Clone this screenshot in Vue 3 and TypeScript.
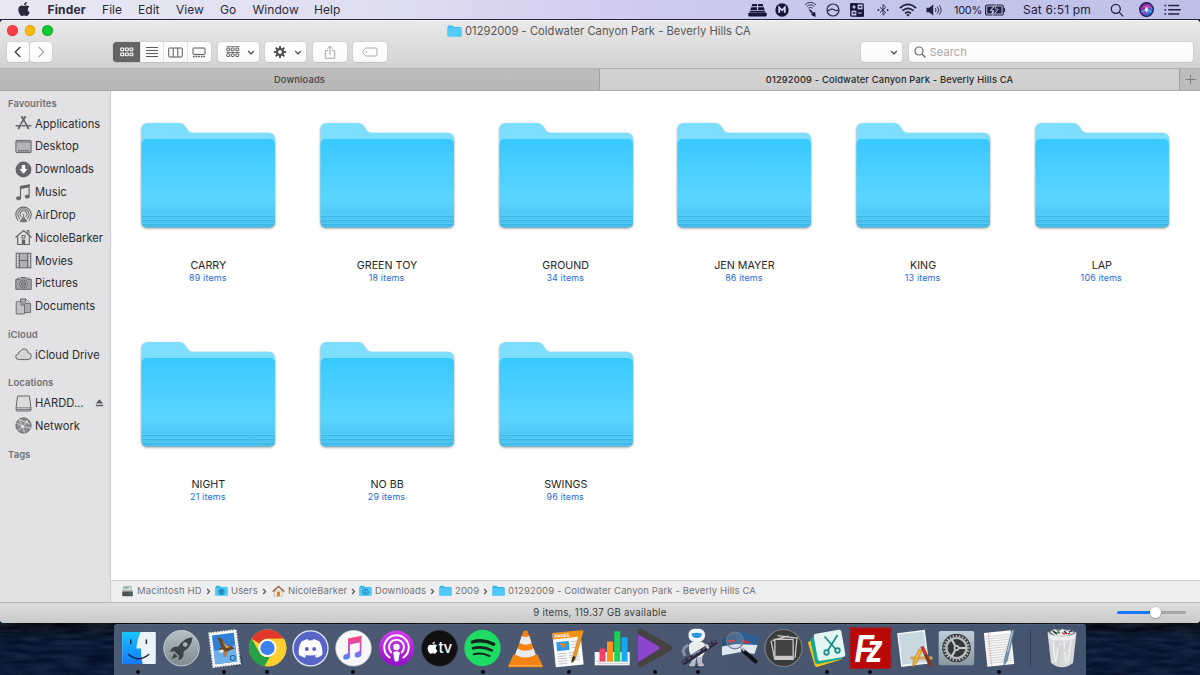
<script setup lang="ts">
interface SideItem { label: string; icon: string; eject?: boolean }
interface SideSection { title: string; items: SideItem[] }

const menus: string[] = ['File', 'Edit', 'View', 'Go', 'Window', 'Help']

const sections: SideSection[] = [
  {
    title: 'Favourites',
    items: [
      { label: 'Applications', icon: 'apps' },
      { label: 'Desktop', icon: 'desktop' },
      { label: 'Downloads', icon: 'downloads' },
      { label: 'Music', icon: 'music' },
      { label: 'AirDrop', icon: 'airdrop' },
      { label: 'NicoleBarker', icon: 'home' },
      { label: 'Movies', icon: 'movies' },
      { label: 'Pictures', icon: 'pictures' },
      { label: 'Documents', icon: 'documents' },
    ],
  },
  { title: 'iCloud', items: [{ label: 'iCloud Drive', icon: 'cloud' }] },
  {
    title: 'Locations',
    items: [
      { label: 'HARDD...', icon: 'disk', eject: true },
      { label: 'Network', icon: 'network' },
    ],
  },
  { title: 'Tags', items: [] },
]

const folders = [
  { name: 'CARRY', count: 89 },
  { name: 'GREEN TOY', count: 18 },
  { name: 'GROUND', count: 34 },
  { name: 'JEN MAYER', count: 86 },
  { name: 'KING', count: 13 },
  { name: 'LAP', count: 106 },
  { name: 'NIGHT', count: 21 },
  { name: 'NO BB', count: 29 },
  { name: 'SWINGS', count: 96 },
]

const crumbs = [
  { label: 'Macintosh HD', icon: 'hd' },
  { label: 'Users', icon: 'users' },
  { label: 'NicoleBarker', icon: 'house' },
  { label: 'Downloads', icon: 'down' },
  { label: '2009', icon: 'folder' },
  { label: '01292009 - Coldwater Canyon Park - Beverly Hills CA', icon: 'folder' },
]

const dock: { id: string; running: boolean }[] = [
  { id: 'finder', running: true },
  { id: 'launchpad', running: false },
  { id: 'mail', running: true },
  { id: 'chrome', running: true },
  { id: 'discord', running: false },
  { id: 'music', running: true },
  { id: 'podcasts', running: false },
  { id: 'tv', running: false },
  { id: 'spotify', running: true },
  { id: 'vlc', running: false },
  { id: 'pages', running: true },
  { id: 'numbers', running: false },
  { id: 'play', running: true },
  { id: 'automator', running: true },
  { id: 'preview', running: false },
  { id: 'photos', running: false },
  { id: 'scissors', running: true },
  { id: 'filezilla', running: true },
  { id: 'applescript', running: false },
  { id: 'prefs', running: false },
  { id: 'textedit', running: true },
]

const angles = (n: number): number[] => Array.from({ length: n }, (_, i) => (i * 360) / n)
const range = (n: number): number[] => Array.from({ length: n }, (_, i) => i)

const applePath =
  'M12.152 6.896c-.948 0-2.415-1.078-3.96-1.04-2.04.027-3.91 1.183-4.961 3.014-2.117 3.675-.546 9.103 1.519 12.09 1.013 1.454 2.208 3.09 3.792 3.039 1.52-.065 2.09-.987 3.935-.987 1.831 0 2.35.987 3.96.948 1.637-.026 2.676-1.48 3.676-2.948 1.156-1.688 1.636-3.325 1.662-3.415-.039-.013-3.182-1.221-3.22-4.857-.026-3.04 2.48-4.494 2.597-4.559-1.429-2.09-3.623-2.324-4.39-2.376-2-.156-3.675 1.09-4.61 1.09zM15.53 3.83c.843-1.012 1.4-2.427 1.245-3.83-1.207.052-2.662.805-3.532 1.818-.78.896-1.454 2.338-1.273 3.714 1.338.104 2.715-.688 3.559-1.701'
const backPath = 'M3.500 7.500q0-6.500 6.500-6.500h31.500q3.200 0 5.200 2.800l3.200 4.700q1.700 2.200 4.400 2.200h76.200q6.500 0 6.500 6.500v80h-133.500z'
const smallFolder = 'M.5 1.800q0-1.300 1.300-1.300h3.300q.7 0 1.100.6l.6.800h6.400q1.300 0 1.300 1.300v7.500q0 .8-.8.800h-12.400q-.8 0-.8-.8z'
</script>

<template>
  <div class="screen">
    <header class="menubar">
      <nav class="menus">
        <svg class="apple" width="14" height="14" viewBox="0 0 24 24"><path :d="applePath" fill="#2b2a3c" /></svg>
        <b>Finder</b>
        <span v-for="m in menus" :key="m">{{ m }}</span>
      </nav>
      <div class="status">
        <svg width="19" height="14" viewBox="0 0 19 14" fill="#17163a">
          <path d="M4.300 1h4.700v2.300h-5.400zM10 1h4.700l.7 2.300h-5.400zM3.200 4.200h5.800v2.700h-6.700zM10 4.200h5.800l.9 2.700h-6.700zM2.200 7.800h14.600l.8 1.600h-16.200z" />
          <rect x=".3" y="9.800" width="18.400" height="3.600" rx=".8" />
        </svg>
        <svg width="14" height="14" viewBox="0 0 14 14"><circle cx="7" cy="7" r="6.700" fill="#17163a" /><path d="M4.200 9.800v-5.400l2.800 2.900 2.800-2.900v5.400" fill="none" stroke="#d3d2f0" stroke-width="1.800" /></svg>
        <svg width="14" height="17" viewBox="0 0 14 17" fill="none" stroke="#33325c" stroke-width="1">
          <path d="M1 3.800q5.500-5 11 0M2.700 5.500q3.800-3.400 7.600 0M4.400 7.200q2.100-1.800 4.200 0" />
          <path d="M4.500 8.800l2.200-.3 3.300 4-1.500 1z" fill="#2a2950" stroke="none" />
          <path d="M10.500 10.500l1 2.500v3l-5-2.500 2-.5z" fill="#17163a" stroke="none" />
        </svg>
        <svg width="14" height="14" viewBox="0 0 14 14" fill="none" stroke="#2b2a4c" stroke-width="1.200"><circle cx="7" cy="7" r="6" /><path d="M1.200 8.400c2.800-1.600 3.600-3 5.800-2.200s3.200 2.800 5.800.6" /></svg>
        <svg width="14" height="14" viewBox="0 0 14 14" fill="none" stroke="#17163a" stroke-width="1.300">
          <rect x=".8" y=".8" width="12.400" height="12.400" rx=".8" /><rect x="1" y="1" width="6" height="6" fill="#17163a" /><rect x="7" y="7" width="6" height="6" fill="#17163a" />
          <path d="M2.200 4h3.600M4 2.200v3.600M8.300 10h3.400" stroke="#dcdcf4" stroke-width="1.200" /><path d="M8.800 4h2.700M2.700 10h2.700" stroke-width="1.300" />
        </svg>
        <svg width="12" height="14" viewBox="0 0 12 14" fill="none" stroke="#33325c" stroke-width="1"><path d="M3 4.300l5.800 5.200-2.800 2.700v-10.600l2.800 2.700-5.800 5.200" /><path d="M.6 7h1.600M9.800 7h1.600" stroke-width="1.800" /></svg>
        <svg width="18" height="14" viewBox="0 0 18 14" fill="none" stroke="#22213f" stroke-width="1.700"><path d="M.9 5q8.100-7.200 16.200 0M3.500 7.700q5.500-4.700 11 0M6 10.300q3-2.400 6 0" /><path d="M7.200 11.700q1.800-1.400 3.600 0l-1.800 1.800z" fill="#22213f" stroke="none" /></svg>
        <svg width="16" height="12" viewBox="0 0 16 12"><path d="M.5 3.700h2.700l4-3.200v11l-4-3.200h-2.700z" fill="#22213f" /><path d="M9.300 4q1.600 2 0 4M11.300 2.500q3 3.500 0 7M13.300 1.300q3.700 4.700 0 9.400" fill="none" stroke="#33325a" stroke-width="1" /></svg>
        <span class="percent">100%</span>
        <svg width="21" height="12" viewBox="0 0 21 12"><rect x=".6" y="1" width="17.600" height="10" rx="1.600" fill="none" stroke="#22213f" stroke-width="1.200" /><path d="M19 4q1.500 2 0 4z" fill="#22213f" stroke="#22213f" /><path d="M2.200 2.500h6l-3.500 4.300h2.700l-1 2.800h-4.200zM10.500 2.500h6v7h-6.500l3.700-4.400h-3.500z" fill="#22213f" /><path d="M11.200.6l-5.500 6h3l-1 5 5.500-6.500h-3z" fill="#22213f" stroke="#c5c6ea" stroke-width=".7" /></svg>
        <span class="clock">Sat 6:51 pm</span>
        <svg width="14" height="14" viewBox="0 0 14 14" fill="none" stroke="#22213f" stroke-width="1.300"><circle cx="5.800" cy="5.800" r="4.500" /><path d="M9.100 9.100l4 4.300" /></svg>
        <svg width="15" height="15" viewBox="0 0 15 15">
          <defs><linearGradient id="siri" x1="0" y1="0" x2="1" y2="1"><stop offset="0" stop-color="#33206e" /><stop offset=".45" stop-color="#9b3ac0" /><stop offset=".75" stop-color="#2f74e0" /><stop offset="1" stop-color="#160f3a" /></linearGradient></defs>
          <circle cx="7.500" cy="7.500" r="6.800" fill="url(#siri)" stroke="#1b1746" stroke-width="1.200" /><path d="M2.600 6.500q5-6.500 9.800 0q-4.800-2-9.800 0" fill="#ee49a9" opacity=".8" /><path d="M2.700 9.700q3-.7 4.800-3.700 1.800 3 4.800 3.700" fill="none" stroke="#4fdcf5" stroke-width="1.100" /><path d="M7.500 4.500l1.500 3.500-1.500 3-1.500-3z" fill="#fff" opacity=".9" />
        </svg>
        <svg width="17" height="12" viewBox="0 0 17 12" fill="none" stroke="#22213f" stroke-width="1.600"><path d="M4.200 1.500h11M4.200 5.700h12.500M4.200 10h11M.5 1.500h1.700M.5 5.700h1.700M.5 10h1.700" /></svg>
      </div>
    </header>

    <main class="window">
      <section class="chrome">
        <div class="titlebar">
          <div class="lights"><i class="red"></i><i class="amber"></i><i class="green"></i></div>
          <div class="title">
            <svg width="15" height="12" viewBox="0 0 15 12"><path :d="smallFolder" fill="#3cbff0" /><rect x=".5" y="3" width="14" height="8.500" rx=".7" fill="#52ccfb" /></svg>
            <span>01292009 - Coldwater Canyon Park - Beverly Hills CA</span>
          </div>
        </div>
        <div class="toolbar">
          <div class="pair">
            <button><svg width="10" height="14" viewBox="0 0 10 14"><path d="M7.300 2l-5 5 5 5" fill="none" stroke="#444" stroke-width="1.400" /></svg></button>
            <button><svg width="10" height="14" viewBox="0 0 10 14"><path d="M2.700 2l5 5-5 5" fill="none" stroke="#a9a9a9" stroke-width="1.200" /></svg></button>
          </div>
          <div class="views">
            <button class="on"><svg width="14" height="10" viewBox="0 0 14 10" fill="none" stroke="#fff" stroke-width="1.100"><template v-for="r in 2" :key="r"><rect v-for="c in 3" :key="c" :x="c * 4.600 - 3.900" :y="r * 5 - 4" width="3" height="2.700" rx=".7" /></template></svg></button>
            <button><svg width="14" height="12" viewBox="0 0 14 12" stroke="#5a5a5a" stroke-width="1"><path d="M1 1.500h12M1 4.500h12M1 7.500h12M1 10.500h12" /></svg></button>
            <button><svg width="15" height="11" viewBox="0 0 15 11" fill="none" stroke="#5a5a5a" stroke-width="1"><rect x=".7" y="1" width="13.600" height="9" rx=".8" /><path d="M5.200 1v9M9.800 1v9" /></svg></button>
            <button><svg width="14" height="11" viewBox="0 0 14 11" fill="none" stroke="#555" stroke-width="1"><rect x="1" y="1" width="12" height="6.400" rx=".8" /><path d="M1 9.500h12" stroke-width="1.400" stroke-dasharray="1.700 .9" /></svg></button>
          </div>
          <button class="wide group">
            <svg width="14" height="13" viewBox="0 0 14 13" fill="none" stroke="#555" stroke-width="1"><path d="M.5 .7h13M.5 6.500h13" stroke-width=".8" /><template v-for="r in 2" :key="r"><rect v-for="c in 3" :key="c" :x="c * 4.500 - 3.700" :y="r * 5.700 - 3.600" width="2.900" height="2.700" rx=".7" /></template></svg>
            <svg class="caret" width="8" height="5" viewBox="0 0 8 5"><path d="M1.200 1l2.800 2.800 2.800-2.800" fill="none" stroke="#444" stroke-width="1.200" /></svg>
          </button>
          <button class="wide action">
            <svg width="14" height="14" viewBox="0 0 14 14"><g fill="#4f4f4f"><rect v-for="a in angles(8)" :key="a" x="6" y=".9" width="2" height="4" rx=".5" :transform="`rotate(${a} 7 7)`" /></g><circle cx="7" cy="7" r="3" fill="none" stroke="#4f4f4f" stroke-width="2.200" /></svg>
            <svg class="caret" width="8" height="5" viewBox="0 0 8 5"><path d="M1.200 1l2.800 2.800 2.800-2.800" fill="none" stroke="#444" stroke-width="1.200" /></svg>
          </button>
          <button class="single share"><svg width="12" height="15" viewBox="0 0 12 15" fill="none" stroke="#a5a5a5" stroke-width="1"><path d="M4 5.500h-2.700v7.700h9.400v-7.700h-2.700M6 9.800v-8.500M3.500 3.800l2.500-2.600 2.500 2.600" /></svg></button>
          <button class="single"><svg width="16" height="10" viewBox="0 0 16 10" fill="none" stroke="#ababab" stroke-width="1"><path d="M4.300 1h9.700q1 0 1 1v6q0 1-1 1h-9.700q-.6 0-1-.4l-2.500-3q-.4-.6 0-1.200l2.500-3q.4-.4 1-.4z" /><circle cx="4.500" cy="5" r=".5" /></svg></button>
          <span class="spacer"></span>
          <button class="wide blank"><svg class="caret" width="8" height="5" viewBox="0 0 8 5"><path d="M1.200 1l2.800 2.800 2.800-2.800" fill="none" stroke="#444" stroke-width="1.200" /></svg></button>
          <div class="search">
            <svg width="12" height="12" viewBox="0 0 12 12" fill="none" stroke="#6b6b6b" stroke-width="1.200"><circle cx="5" cy="5" r="4" /><path d="M8 8l3.500 3.500" /></svg>
            <span>Search</span>
          </div>
        </div>
      </section>

      <div class="tabs">
        <div class="tab">Downloads</div>
        <div class="tab active">01292009 - Coldwater Canyon Park - Beverly Hills CA</div>
        <div class="add"><svg width="11" height="11" viewBox="0 0 11 11"><path d="M5.500 .5v10M.5 5.500h10" stroke="#777" stroke-width=".9" /></svg></div>
      </div>

      <div class="body">
        <aside class="sidebar">
          <section v-for="s in sections" :key="s.title">
            <h3>{{ s.title }}</h3>
            <div v-for="it in s.items" :key="it.label" class="side-item">
              <svg width="17" height="17" viewBox="0 0 17 17" fill="none" stroke="#66666a" stroke-width="1">
                <g v-if="it.icon === 'apps'" stroke-width="1.900"><path d="M6.500 1.300l7.200 12.700M10.500 1.300l-7.200 12.700" /><path d="M.6 10.700h4.200M6.600 10.700h3.800M12.600 10.700h3.700" stroke-width="1.500" /><path d="M8.200 6.800l-1.900 3.300M8.800 6.500l1.600 3" stroke="#e2e2e4" stroke-width=".5" /></g>
                <g v-else-if="it.icon === 'desktop'"><rect x=".9" y="2.400" width="15.200" height="12.200" rx=".6" fill="#b4b4b8" /><path d="M1 4h15" stroke-width=".8" /><path d="M3 12.700h11.500" stroke-width="1.600" stroke-dasharray="1.700 .6" /></g>
                <g v-else-if="it.icon === 'downloads'"><circle cx="8.500" cy="8.500" r="7.900" fill="#66666a" stroke="none" /><path d="M6.800 4h3.400v4h2.400l-4.100 4.800-4.100-4.800h2.400z" fill="#fff" stroke="none" /></g>
                <g v-else-if="it.icon === 'music'" fill="#66666a"><path d="M5.500 13.800v-11.300l8.600-1.600v11.300" fill="none" stroke-width="1.200" /><path d="M5 2.400l9.600-1.900v2.800l-9.600 2z" stroke="none" /><ellipse cx="3.600" cy="14.300" rx="2.100" ry="1.500" /><ellipse cx="12.300" cy="12.600" rx="2.100" ry="1.500" /></g>
                <g v-else-if="it.icon === 'airdrop'" stroke-width="1.050"><path d="M3.300 14.500a7.700 7.700 0 1 1 10.400 0M4.800 12.600a5.600 5.600 0 1 1 7.400 0M6.300 10.900a3.500 3.500 0 1 1 4.400 0" /><path d="M8.500 7.500l1.300 1.500-1.300.8-1.300-.8zM8.500 9.500l-4 6q4 1.700 8 0z" fill="#77777a" stroke="none" /></g>
                <g v-else-if="it.icon === 'home'"><path d="M.5 8.500l8-7 8 7M2.700 7.500v8h11.600v-8" stroke-width="1.200" /><path d="M12.200 4v-2.500h1.800v4" /><rect x="7" y="6.500" width="3" height="2.500" /><rect x="6.800" y="10.500" width="3.400" height="5" fill="#66666a" stroke="none" /></g>
                <g v-else-if="it.icon === 'movies'"><rect x="1.200" y="1.200" width="14.600" height="14.600" fill="#b0b0b4" /><path d="M4.400 1v15M12.600 1v15M4.400 8.500h8.200" /><path d="M2.600 2.500v12.500M14.400 2.500v12.500" stroke="#ececee" stroke-width="1.200" stroke-dasharray="1.200 1.200" /></g>
                <g v-else-if="it.icon === 'pictures'"><path d="M.8 4.300h4l1.200-1.800h5l1.200 1.800h4v10h-15.400z" fill="#a3a3a7" /><circle cx="8.500" cy="9" r="4" fill="#c5c5c8" /><circle cx="8.500" cy="9" r="2.300" fill="#8b8b8f" /><path d="M2.300 3.200h1.800M13 3.200h1.500" /></g>
                <g v-else-if="it.icon === 'documents'" stroke-width=".9"><path d="M5.500 .9h5.200l4.900 4.500v9.200h-10.100z" fill="#a9a9ad" /><path d="M10.600 .9v4.600h4.900" fill="#ddd" /><path d="M1.200 3.700h5l3.300 3.300v9h-8.300z" fill="#c2c2c5" /><path d="M6.100 3.700v3.400h3.400" /></g>
                <g v-else-if="it.icon === 'cloud'"><path d="M4.200 13.600q-3.500 0-3.500-2.900 0-2.500 2.600-2.800-.3-2.100 2-2.500 1.300-2.800 4.200-2.500 3.200.2 3.600 3.800 3.200.5 3.200 3.500 0 3.400-3.300 3.400z" fill="#d4d4d7" /></g>
                <g v-else-if="it.icon === 'disk'"><path d="M2.600 1h11.800l1.500 11.500v2.500q0 1-1 1h-12.800q-1 0-1-1v-2.500z" fill="#dcdcdf" /><path d="M1.100 12.800h14.800M1.100 14.500h14.800" stroke-width=".8" /></g>
                <g v-else><circle cx="8.500" cy="8.500" r="7.600" fill="#8b8b8f" /><path d="M1.500 6l6 3.500 5.500-6.500M7.500 9.500l2 6M7.500 9.500l8.300 1.500M4 2.500l3.500 7-5 4.500M4 2.500l11 4.500" stroke="#dededf" stroke-width=".8" /><circle cx="7.500" cy="9.500" r="1.300" fill="#eee" stroke="none" /><circle cx="11.500" cy="5" r="1" fill="#eee" stroke="none" /></g>
              </svg>
              <span>{{ it.label }}</span>
              <svg v-if="it.eject" class="eject" width="9" height="8" viewBox="0 0 9 8"><path d="M4.500 .3l3.700 4.300h-7.400zM.8 5.800h7.400v1.400h-7.400z" fill="#5c5c60" /></svg>
            </div>
          </section>
        </aside>

        <section class="content">
          <div class="grid">
            <figure v-for="f in folders" :key="f.name">
              <svg class="folder" width="140" height="112" viewBox="0 0 140 112">
                <defs>
                  <linearGradient id="front" x1="0" y1="0" x2="0" y2="1"><stop offset="0" stop-color="#37c9ff" /><stop offset=".2" stop-color="#43ccff" /><stop offset=".68" stop-color="#5bd5ff" /><stop offset=".84" stop-color="#50c9f5" /><stop offset="1" stop-color="#43bdeb" /></linearGradient>
                </defs>
                <path :d="backPath" fill="#7edeff" />
                <rect x="3.500" y="17" width="133.500" height="88.500" rx="5" fill="url(#front)" />
                <path d="M4 94.500h132.500M4 98.500h132.500M4 102.500h132.500" stroke="#35aede" stroke-width="1" opacity=".6" /><path d="M4 93.500h132.500M4 97.500h132.500M4 101.500h132.500" stroke="#6ad2f8" stroke-width="1" opacity=".5" />
              </svg>
              <figcaption><span>{{ f.name }}</span><em>{{ f.count }} items</em></figcaption>
            </figure>
          </div>
          <div class="pathbar">
            <div v-for="(c, i) in crumbs" :key="c.label" class="crumb">
              <svg width="13" height="12" viewBox="0 0 15 13">
                <g v-if="c.icon === 'hd'"><path d="M3 .8h9l1.500 6.500v5h-12v-5z" fill="#9fa3a3" /><path d="M3.500 1.500h8l.8 4h-9.600z" fill="#dbe5df" /><rect x="1.500" y="7.500" width="12" height="5" rx=".7" fill="#4f5354" /><path d="M4 3h5M8 10h4" stroke="#2e8b63" /></g>
                <g v-else-if="c.icon === 'house'"><path d="M2.600 6.500h9.800v6h-9.800z" fill="#f2e8d8" stroke="#a98" stroke-width=".5" /><path d="M.8 7.300l6.700-6 6.700 6" fill="none" stroke="#9a6b48" stroke-width="1.800" /><rect x="5.800" y="7.500" width="3.400" height="5" fill="#ee7b1c" /></g>
                <g v-else><path :d="smallFolder" fill="#3ab8ea" /><rect x=".5" y="3" width="14" height="9" rx=".7" fill="#4dc8f8" /><g v-if="c.icon === 'users'" fill="#1482b5"><circle cx="7.500" cy="7.500" r="3.800" fill="#2a9ace" /><circle cx="7.500" cy="6.200" r="1.500" /><path d="M4.800 10q2.700-3.600 5.400 0z" /></g><g v-if="c.icon === 'down'" fill="none" stroke="#1482b5"><circle cx="7.500" cy="7.500" r="3.300" /><path d="M7.500 5.500v3M6.200 7.500l1.300 1.500 1.300-1.500" /></g></g>
              </svg>
              <span>{{ c.label }}</span>
              <svg v-if="i < crumbs.length - 1" class="sep" width="5" height="7" viewBox="0 0 5 7"><path d="M1.200 1l2.300 2.500-2.300 2.500" fill="none" stroke="#555" stroke-width="1.200" /></svg>
            </div>
          </div>
        </section>
      </div>

      <footer class="statusbar">
        <span>9 items, 119.37 GB available</span>
        <div class="slider"><i></i></div>
      </footer>
    </main>

    <div class="desk">
      <svg class="waves" width="1200" height="52" viewBox="0 0 1200 52">
        <filter id="sea" x="0" y="0" width="100%" height="100%"><feTurbulence type="fractalNoise" baseFrequency=".035 .22" numOctaves="3" seed="4" /><feColorMatrix values="0 0 0 0 .12  0 0 0 0 .2  0 0 0 0 .34  .9 0 0 0 -.2" /></filter>
        <rect width="1200" height="52" filter="url(#sea)" />
      </svg>
      <div class="dock">
        <div v-for="app in dock" :key="app.id" class="app">
          <svg width="43" height="42" viewBox="0 0 43 42">
            <g v-if="app.id === 'finder'">
              <defs><linearGradient id="fl" x1="0" y1="0" x2="0" y2="1"><stop offset="0" stop-color="#17c5fd" /><stop offset="1" stop-color="#1478fb" /></linearGradient></defs>
              <rect x="5.200" y="5" width="33.600" height="32" rx="1.200" fill="#edf1f8" /><path d="M6.200 5h17.500q-3.500 7-4.300 16.500h4.600q-.2 9 1.700 15.500h-19.500q-1 0-1-1v-30q0-1 1-1z" fill="url(#fl)" /><path d="M11.700 27.500q10 8.500 20 0" fill="none" stroke="#152238" stroke-width="1.300" stroke-linecap="round" /><path d="M13.700 13v3.500M29.400 13v3.500" stroke="#152238" stroke-width="1.400" stroke-linecap="round" />
            </g>
            <g v-else-if="app.id === 'launchpad'">
              <defs><linearGradient id="lp" x1="0" y1="0" x2="0" y2="1"><stop offset="0" stop-color="#b5c0c7" /><stop offset="1" stop-color="#7f8a90" /></linearGradient></defs>
              <circle cx="21.500" cy="21.200" r="17.700" fill="url(#lp)" stroke="#c6cdd2" stroke-width="1" /><path d="M32.500 10.300q-8.500.5-14 9.200l-4.800.5q-2.500 1.500-4 5l4.700-.8 4.700 4.700-.8 4.700q3.500-1.200 5-4l.5-5q8-5 8.700-14.300z" fill="#3c4348" /><circle cx="25.200" cy="17.500" r="2.300" fill="#a8b2b8" /><path d="M14.300 26l-2.800 6.300 6.200-2.800z" fill="#3c4348" />
            </g>
            <g v-else-if="app.id === 'mail'">
              <circle cx="33" cy="33" r="7" fill="#3c4a64" /><g transform="rotate(-7 21.500 21)"><rect x="8" y="4.500" width="27" height="34" fill="#f4f4f2" stroke="#f4f4f2" stroke-width="1.700" stroke-dasharray="1.700 1" /><rect x="10.500" y="7" width="22" height="29" fill="#2f7fd6" /><path d="M10.500 22q11 2 22-3v17h-22z" fill="#6db0ea" /><path d="M15.500 9.500l4 1.500 3.500 7q5 .5 8.500 5l-4 .5-4.500 2-4.500-1.500-2.500-2.500 2.500-1.500z" fill="#6a4526" /><path d="M20 14l3 4 4.500 2.500-4.500 1z" fill="#cfa46a" /><path d="M15 23.500l4-1.500 2 2-3 1.500z" fill="#f2ead8" /><path d="M20.500 24.500l4.500.5-3 5-3-.5z" fill="#a9824f" /><circle cx="28.500" cy="32" r="2.500" fill="none" stroke="#2b5a99" stroke-width="1" /></g>
            </g>
            <g v-else-if="app.id === 'chrome'">
              <circle cx="21.500" cy="21" r="18.500" fill="#fdd02e" /><path d="M5.480 11.750a18.500 18.500 0 0 1 32.040 0h-16.020a9.250 9.250 0 0 0-8.010 4.630z" fill="#e2392c" /><path d="M5.480 11.750l8 13.900a9.250 9.250 0 0 0 8.020 4.600h2l-6 9a18.500 18.500 0 0 1-12.020-27.500z" fill="#26a148" /><path d="M5.480 11.750l8 13.900a9.250 9.250 0 0 0 10 4.300l-5 9.300z" fill="#26a148" /><path d="M21.500 11.800h16.500a18.500 18.500 0 0 1-16.500 27.700l8-13.900z" fill="#fdd02e" /><circle cx="21.500" cy="21" r="9" fill="#fff" /><circle cx="21.500" cy="21" r="7.200" fill="#3b82ee" />
            </g>
            <g v-else-if="app.id === 'discord'">
              <circle cx="21.500" cy="21.300" r="17.500" fill="#5865c8" stroke="#e6e8f5" stroke-width="1.300" /><path d="M12.500 14.500q3.200-2 6.300-2.500l.8 1.500q2-.3 3.900 0l.8-1.500q3.200.5 6.200 2.500 3.600 6.300 2.800 13.300-3 2.300-6 3l-1.500-2.300q1.500-.5 2.500-1.300-6.800 2.500-13.600 0 1.200.9 2.600 1.400l-1.400 2.200q-3.200-.8-6.200-3-.6-7.500 2.800-13.300z" fill="#fff" /><circle cx="17.800" cy="22" r="2" fill="#5865c8" /><circle cx="25.200" cy="22" r="2" fill="#5865c8" />
            </g>
            <g v-else-if="app.id === 'music'">
              <defs><linearGradient id="mu" x1="0" y1="0" x2="0" y2="1"><stop offset="0" stop-color="#fb3f6b" /><stop offset=".5" stop-color="#cc54d6" /><stop offset="1" stop-color="#3d8dff" /></linearGradient></defs>
              <circle cx="21.500" cy="21.300" r="17.800" fill="#f7f7fa" stroke="#cfd1da" stroke-width=".7" /><path d="M16 11.500l13.500-2.700v18q0 3.300-3.600 3.700-3.200.2-3.200-2.600 0-2.500 3-3.100 2-.3 2-1.300v-8l-9.700 2v11.500q0 3.300-3.600 3.600-3.200.2-3.200-2.600 0-2.400 3-3.100 1.800-.4 1.800-1.500z" fill="url(#mu)" />
            </g>
            <g v-else-if="app.id === 'podcasts'">
              <defs><linearGradient id="po" x1="0" y1="0" x2="0" y2="1"><stop offset="0" stop-color="#d53cf4" /><stop offset="1" stop-color="#9112c0" /></linearGradient></defs>
              <circle cx="21.500" cy="21.300" r="17.700" fill="url(#po)" /><path d="M15.300 31a12.200 12.200 0 1 1 12.400 0M16.800 26a7.500 7.500 0 1 1 9.400 0" fill="none" stroke="#fff" stroke-width="2" /><circle cx="21.500" cy="20" r="3.200" fill="#fff" /><path d="M18.300 26q0-1.800 3.200-1.800t3.200 1.800l-1.200 7.300q-.3 1.300-2 1.300t-2-1.300z" fill="#fff" />
            </g>
            <g v-else-if="app.id === 'tv'">
              <circle cx="21.500" cy="21.300" r="17.800" fill="#101012" stroke="#29292c" stroke-width=".7" /><g transform="translate(8.500 14.700) scale(.5)"><path :d="applePath" fill="#fff" /></g><text x="20.500" y="26" class="tv">tv</text>
            </g>
            <g v-else-if="app.id === 'spotify'">
              <circle cx="21.500" cy="21" r="18.200" fill="#1edc63" /><path d="M11.200 15q11-3.300 21.500 2.200" fill="none" stroke="#14231b" stroke-width="3.300" stroke-linecap="round" /><path d="M12 21.300q9.700-2.700 18.700 2.100" fill="none" stroke="#14231b" stroke-width="2.700" stroke-linecap="round" /><path d="M12.800 27.200q8.500-2 15.700 1.900" fill="none" stroke="#14231b" stroke-width="2.200" stroke-linecap="round" />
            </g>
            <g v-else-if="app.id === 'vlc'">
              <path d="M9.500 27.500h24l5.300 11.500q.3 1.300-1 1.300h-32.500q-1.300 0-1-1.300z" fill="#f58312" /><path d="M5 38.500h33" stroke="#ffab52" stroke-width="1" /><path d="M19.300 4.500q2.200-2.200 4.400 0l8.800 25.500q-11 6-22 0z" fill="#f58312" /><path d="M17.700 9q3.800 2.200 7.600 0l2.300 7q-6 3.600-12.200 0zM13.300 21.500q8.200 4.500 16.400 0l2.100 6.300q-10.300 5.600-20.600 0z" fill="#e9ebee" />
            </g>
            <g v-else-if="app.id === 'pages'">
              <g transform="rotate(-6 21 22)"><rect x="7" y="6" width="28" height="33" fill="#fafafa" /><rect x="7" y="4.500" width="28" height="6.500" fill="#f59116" /><text x="9" y="9.800" class="pages">PAGES</text><rect x="10" y="14" width="12.500" height="9" fill="#2e9cec" /><path d="M13 16h7l-3.500 5z" fill="#e98523" /><path d="M24.500 15h7M24.500 18h7M24.500 21h7M10 26h9M10 28.500h9M10 31h9M10 33.500h9M10 36h9M21.500 26h10M21.500 28.500h10M21.500 31h10M21.500 33.500h10" stroke="#c2c2c2" stroke-width=".9" /></g><path d="M33.500 3l3 1-8.500 29-2.500 2.500-.3-3.500z" fill="#f49a1c" stroke="#b66c12" stroke-width=".5" /><path d="M26 29l2.500 1-2 4-2.500 2z" fill="#272727" />
            </g>
            <g v-else-if="app.id === 'numbers'">
              <rect x="4.700" y="25" width="35" height="13.300" fill="#f4f4f4" /><path d="M6 34.500h32M8 36.500h30" stroke="#c2c2c2" stroke-width=".7" /><rect x="9.500" y="21.500" width="6" height="13" rx=".8" fill="#f54063" /><rect x="17" y="14.500" width="6" height="20" rx=".8" fill="#ff9417" /><rect x="24.300" y="4.200" width="6" height="30.300" rx=".8" fill="#17d35c" /><rect x="31.500" y="10.300" width="6" height="24.200" rx=".8" fill="#17a8f3" />
            </g>
            <g v-else-if="app.id === 'play'">
              <path d="M4.800 4.500q0-4.500 4-2.500l28.500 15.700q4.500 3.200 0 6.500l-28.500 15.500q-4 2-4-2.500z" fill="#464244" /><path d="M4.900 7l21 12.500q1.800 1.300 0 2.600l-21 13.400z" fill="#8b45cf" />
            </g>
            <g v-else-if="app.id === 'automator'">
              <ellipse cx="21" cy="39" rx="9" ry="1.700" fill="#38445b" /><path d="M14.500 27l1 8-3 3.500q3 1.500 6.500.5l1.500-9 1.500 9q4 1 6.500-.5l-2.500-3.500.5-8z" fill="#b9bcc9" /><path d="M12.500 18q-4.500 2-5.500 6l2 5" fill="none" stroke="#8d90a0" stroke-width="3" /><path d="M13 18q2-4 8-4t8.500 4q.5 8-4 12h-8.500q-5-4-4-12z" fill="#e9ebee" /><rect x="12.500" y="1.700" width="16.500" height="13" rx="6" fill="#f6f7f9" /><path d="M15.500 6.500q5.300-1.500 10.600 0-.5 4.500-5.300 4.500t-5.300-4.500z" fill="#2897df" /><path d="M6.500 36.500l34-22" stroke="#2b2a40" stroke-width="4.800" /><path d="M6.500 35.500l33-21.500" stroke="#69677e" stroke-width="1.200" stroke-dasharray="4 2" /><path d="M17 27.500l7-4.500" stroke="#85849c" stroke-width="2" /><path d="M30 17.500l2.500 4" stroke="#d4d6dd" stroke-width="2.500" />
            </g>
            <g v-else-if="app.id === 'preview'">
              <path d="M3 12l13-4 4 17-17 2.500z" fill="#2a557e" /><path d="M20 3.500l20.500 6.500-5 16.500-19-3.500z" fill="#2c5f95" /><path d="M3 19.500l14-2.500 21.500 1-3 9-13.500-2-19 3.500z" fill="#dfe7ee" /><path d="M9 14.500l7-1M22 13.500l9 2.500" stroke="#e02d2e" stroke-width="2.200" /><circle cx="16" cy="13.500" r="8.300" fill="#9fc4e3" fill-opacity=".2" stroke="#6d7987" stroke-width="1.300" /><path d="M24 23.500l12.500 11" stroke="#0f1217" stroke-width="4" stroke-linecap="round" /><path d="M21.500 20l4 4" stroke="#aeb6bf" stroke-width="2.200" />
            </g>
            <g v-else-if="app.id === 'photos'">
              <circle cx="21.500" cy="21" r="18.500" fill="#3b3b3b" stroke="#7d7e80" stroke-width="1.200" /><path d="M10.500 13.500l16-4.500M15.500 8.700l19.500 2.300-2 20M9 13.500l3.500 18" fill="none" stroke="#c9c9c9" stroke-width="1.300" /><rect x="12.200" y="11.700" width="19.600" height="21.300" fill="#c9c9c9" /><rect x="13.500" y="13" width="17" height="15.800" fill="#434343" />
            </g>
            <g v-else-if="app.id === 'scissors'">
              <rect x="5" y="10" width="28" height="27" rx="2.500" fill="#f4c516" transform="rotate(-17 19 24)" /><rect x="6.500" y="8" width="28" height="27" rx="2.500" fill="#12a995" transform="rotate(-12 20 22)" /><rect x="9.500" y="4.500" width="28" height="27.500" rx="2.500" fill="#e4f6f4" transform="rotate(-10 24 18)" /><g fill="none" stroke="#148c86" stroke-width="1.700"><path d="M18.500 9.500l11.500 13M31.500 8l-10 16" /><circle cx="20.500" cy="25.500" r="2.300" /><circle cx="31.500" cy="23.500" r="2.300" /></g>
            </g>
            <g v-else-if="app.id === 'filezilla'">
              <rect x="1.700" y="1.400" width="39.600" height="39.600" fill="#b90808" stroke="#b90808" stroke-width="2.200" stroke-dasharray="2 1.200" /><text transform="translate(5.500 34.500) scale(.84 1)" class="fz">Fz</text>
            </g>
            <g v-else-if="app.id === 'applescript'">
              <g transform="rotate(-7 20 21)"><rect x="7" y="4.500" width="28" height="34" fill="#f3f4f4" /><rect x="8.500" y="6" width="25" height="30.500" fill="#c8d8e0" /></g><path d="M18.500 29.500h22v3h-22z" fill="#d8a45d" /><path d="M27 22l3 1.500-6 13.500-3.500 3 .5-5z" fill="#f0b528" stroke="#9a6b1d" stroke-width=".5" /><path d="M28.500 20l3-.7 9.500 19-2.300 2-2.700-3z" fill="#803a20" /><path d="M28.500 20l3-.7 3.500 7-3 1.500z" fill="#d03b28" />
            </g>
            <g v-else-if="app.id === 'prefs'">
              <defs><linearGradient id="sp" x1="0" y1="0" x2="0" y2="1"><stop offset="0" stop-color="#bdcfdb" /><stop offset="1" stop-color="#8c989f" /></linearGradient></defs>
              <rect x="3.700" y="4" width="35.500" height="34.300" rx="1.800" fill="url(#sp)" /><circle cx="21.500" cy="21" r="14.300" fill="#34373a" /><g fill="#b9bcbe"><rect v-for="a in angles(24)" :key="a" x="20.800" y="7.600" width="1.400" height="3" :transform="`rotate(${a} 21.500 21)`" /></g><circle cx="21.500" cy="21" r="10" fill="none" stroke="#b9bcbe" stroke-width="2.200" /><g stroke="#c8cacc" stroke-width="2.200"><path v-for="a in [90, 210, 330]" :key="a" d="M21.500 21v-9.500" :transform="`rotate(${a} 21.500 21)`" /></g><circle cx="21.500" cy="21" r="3" fill="#bfc2c4" /><circle cx="21.500" cy="21" r="1.200" fill="#333" />
            </g>
            <g v-else-if="app.id === 'textedit'">
              <g transform="rotate(-6 21 21)"><rect x="7.500" y="4.500" width="27" height="34" fill="#fafafa" /><path v-for="n in range(12)" :key="n" :d="`M9 ${8.500 + n * 2.400}h24`" stroke="#b8babd" stroke-width=".6" /><path d="M12 5v33" stroke="#e9a5a0" stroke-width=".6" /></g><path d="M34 2.500l2.500.8-7.500 31-3.200 4 .5-5.300z" fill="#7194b1" stroke="#4b657a" stroke-width=".5" /><path d="M34.500 4l-5 21" stroke="#c7dbe9" stroke-width=".8" />
            </g>
          </svg>
          <i v-if="app.running" class="dot"></i>
        </div>
        <span class="divider"></span>
        <svg class="trash" width="32" height="42" viewBox="0 0 32 42">
          <path d="M1.500 5.500q14.500-5 29 0l-3.500 30.500q-11 8.500-22 0z" fill="#d6d8da" /><path d="M3 7q13 5 26 0l-.7 5q-12.300 3-24.600 0z" fill="#eceded" /><ellipse cx="16" cy="5.700" rx="13" ry="3.500" fill="#83898f" /><path d="M4.500 5l4-3 4 2.500 4-2.500 4.500 2 3.500-1.500 3 3.500-6 2.700h-12z" fill="#eee" /><path d="M7 4l4 3M18 4l3 3M23 5l3-1.500" stroke="#2a333a" stroke-width="1.600" /><path d="M11 5l3 1" stroke="#20a65d" stroke-width="2" /><path d="M16 6l3 1M22 7l2-1" stroke="#d3413d" stroke-width="1.700" /><path d="M7 14l2 21M13 16l-3 18M18 14l2 22M25 13l-3 21" stroke="#f4f4f4" stroke-width="1.600" opacity=".75" /><path d="M11 14l3 10-2 13M22 17l-4 8" fill="none" stroke="#b9bcbf" stroke-width="1.200" opacity=".6" />
        </svg>
      </div>
    </div>
  </div>
</template>

<style>
html, body { margin: 0; background: #020b1d; overflow: hidden; }
</style>

<style scoped>
.screen { width: 1200px; height: 675px; display: flex; flex-direction: column; overflow: hidden; font-family: Inter, "Liberation Sans", sans-serif; color: #2b2b2b; background: #06132a; }
* { box-sizing: border-box; }
svg { display: block; flex: none; }
button { border: 0; padding: 0; margin: 0; display: flex; align-items: center; justify-content: center; background: none; }

.menubar { height: 20px; flex: none; display: flex; justify-content: space-between; background: linear-gradient(90deg, #e9e7f3 0, #dedef1 33%, #cfccee 52%, #c2c6ea 75%, #bfc0e9 100%); border-bottom: 1px solid #26243c; font-size: 12px; color: #2b2a3c; }
.menus { display: grid; grid-template-columns: 30.500px 54.500px 36px 38px 44px 32.500px 61.500px 40px; padding-left: 17px; align-items: center; letter-spacing: .05px; }
.menus b { letter-spacing: .15px; }
.apple { margin-top: -2px; }
.status { width: 455px; display: grid; grid-template-columns: 25px 24px 33px 12px 36px 15px 36px 16px 40px 26px 94px 30px 29px 23px; align-items: center; justify-items: center; color: #22213f; }
.percent { justify-self: start; padding-left: 12px; font-size: 11px; letter-spacing: -.3px; }
.clock { justify-self: start; padding-left: 15px; letter-spacing: .18px; white-space: nowrap; }

.window { height: 603px; flex: none; display: flex; flex-direction: column; background: #dcdcdc; border-radius: 4px; overflow: hidden; }
.chrome { height: 48px; flex: none; background: linear-gradient(#e9e9e9, #d2d2d2); border-top: 1px solid #f6f6f6; }
.titlebar { height: 20px; display: grid; grid-template-columns: 447px auto; }
.lights { display: flex; gap: 7px; padding: 4px 0 0 7px; }
.lights i { width: 10.600px; height: 10.600px; border-radius: 50%; border: .5px solid #0002; }
.red { background: #fc4048; }
.amber { background: #fdb908; }
.green { background: #0acb30; }
.title { display: flex; align-items: center; gap: 3px; height: 19px; font-size: 11.200px; color: #565656; white-space: nowrap; }
.title span { letter-spacing: .02px; }
.toolbar { display: flex; align-items: center; padding: 0 7px; height: 22px; }
.toolbar button, .search { height: 20.500px; background: linear-gradient(#fff, #f8f8f8); border-radius: 3.500px; box-shadow: 0 0 0 .6px #cacaca, 0 1px .5px #b8b8b8; }
.pair { display: flex; gap: 1px; margin-right: 61px; }
.pair button { width: 22px; }
.views { display: flex; margin-right: 7px; border-radius: 3.500px; box-shadow: 0 0 0 .6px #cacaca, 0 1px .5px #b8b8b8; overflow: hidden; }
.views button { width: 23.800px; border-radius: 0; box-shadow: none; border-left: 1px solid #e2e2e2; }
.views button.on { width: 26.500px; background: #646464; border-left: 0; padding-left: 2px; }
.toolbar .wide { width: 41px; justify-content: space-between; padding: 0 4px 0 8px; margin-right: 6.500px; }
.toolbar .blank { justify-content: flex-end; margin-right: 7px; }
.single { width: 34px; margin-right: 6.500px; }
.spacer { flex: 1; }
.search { width: 284.500px; display: flex; align-items: center; gap: 4px; padding-left: 5px; font-size: 11px; color: #a9a9a9; letter-spacing: .15px; }

.tabs { height: 23px; flex: none; display: grid; grid-template-columns: 600px 580px 20px; border-top: 1px solid #b1b1b1; border-bottom: 1px solid #a9a9a9; font-size: 9.300px; font-weight: 500; letter-spacing: .17px; }
.tab, .add { display: flex; align-items: center; justify-content: center; }
.tab { background: linear-gradient(#bdbdbd, #b7b7b7); border-right: 1px solid #9f9f9f; color: #454545; }
.tab.active { background: linear-gradient(#d4d4d4, #cfcfcf); color: #272727; }
.add { background: #bcbcbc; }

.body { height: 511px; flex: none; display: grid; grid-template-columns: 111px 1089px; }
.sidebar { background: #e2e2e4; border-right: 1px solid #cbcbcd; padding-top: 5px; }
.sidebar section { margin-bottom: 9.400px; }
.sidebar h3 { margin: 0; height: 16.200px; line-height: 16.200px; padding-left: 8px; font-size: 9.500px; font-weight: 600; letter-spacing: .05px; color: #707074; }
.side-item { height: 22.840px; display: flex; align-items: center; gap: 3px; padding-left: 15px; font-size: 11.200px; color: #2d2d2f; white-space: nowrap; }
.eject { margin-left: 8.500px; }

.content { background: #fff; display: flex; flex-direction: column; }
.grid { height: 489px; display: grid; grid-template-columns: repeat(6, 178.700px); grid-auto-rows: 218.700px; padding: 31px 0 0 8px; }
figure { margin: 0; display: flex; flex-direction: column; align-items: center; }
.folder { filter: drop-shadow(0 1px 1.200px #0006); }
figcaption { margin-top: 25px; display: flex; flex-direction: column; align-items: center; font-size: 10.700px; line-height: 13px; color: #242424; }
figcaption em { font-style: normal; font-size: 8.900px; line-height: 12px; letter-spacing: .17px; margin-left: -1px; color: #1d6be0; }
.pathbar { height: 22px; display: grid; grid-template-columns: 94px 57px 87px 80px 53px auto; padding: 0 0 1px 10px; border-top: 1px solid #cfcfcf; background: #eeeeee; font-size: 9.500px; color: #747474; }
.crumb { display: flex; align-items: center; white-space: nowrap; letter-spacing: .12px; }
.crumb span { margin-left: 3px; padding-bottom: 1px; }
.sep { margin-left: 4px; }

.statusbar { height: 21px; flex: none; display: grid; grid-template-columns: 1fr; align-items: center; background: linear-gradient(#dedede, #c9c9c9); border-top: 1px solid #b4b4b4; position: relative; font-size: 9.700px; letter-spacing: .27px; color: #3b3b3b; }
.statusbar span { text-align: center; padding-bottom: 1.500px; }
.slider { position: absolute; right: 14px; top: 8px; width: 69px; height: 2.500px; border-radius: 2px; background: linear-gradient(90deg, #1a78fa 55%, #a6a6a6 55%); }
.slider i { position: absolute; left: 33px; top: -4px; width: 10.500px; height: 10.500px; border-radius: 50%; background: #fff; box-shadow: 0 .5px 1.500px #0007; }

.desk { height: 52px; flex: none; display: flex; position: relative; padding: 1px 0 0 114px; background: linear-gradient(#010408, #03112a 30%); }
.waves { position: absolute; left: 0; top: 0; opacity: .4; }
.dock { position: relative; width: 972px; height: 51px; display: flex; padding: 3px 0 0 2.500px; border-radius: 4px 4px 0 0; background: linear-gradient(90deg, #4b5a73, #4a5771 55%, #45546e); box-shadow: inset 0 .5px #5c6980; }
.app { width: 43.070px; display: flex; flex-direction: column; align-items: center; }
.dot { width: 4px; height: 4px; margin-top: .5px; border-radius: 50%; background: #050608; }
.divider { width: 1.500px; height: 37px; margin: 3px 14.500px 0 9px; background: #333f56; }
.tv { font-size: 15px; font-weight: 500; fill: #fff; letter-spacing: -.3px; }
.pages { font-size: 4.500px; font-weight: 700; fill: #fff; }
.fz { font-family: "Liberation Sans", sans-serif; font-size: 38px; font-weight: 700; font-style: italic; fill: #fff; letter-spacing: -9px; }
</style>
